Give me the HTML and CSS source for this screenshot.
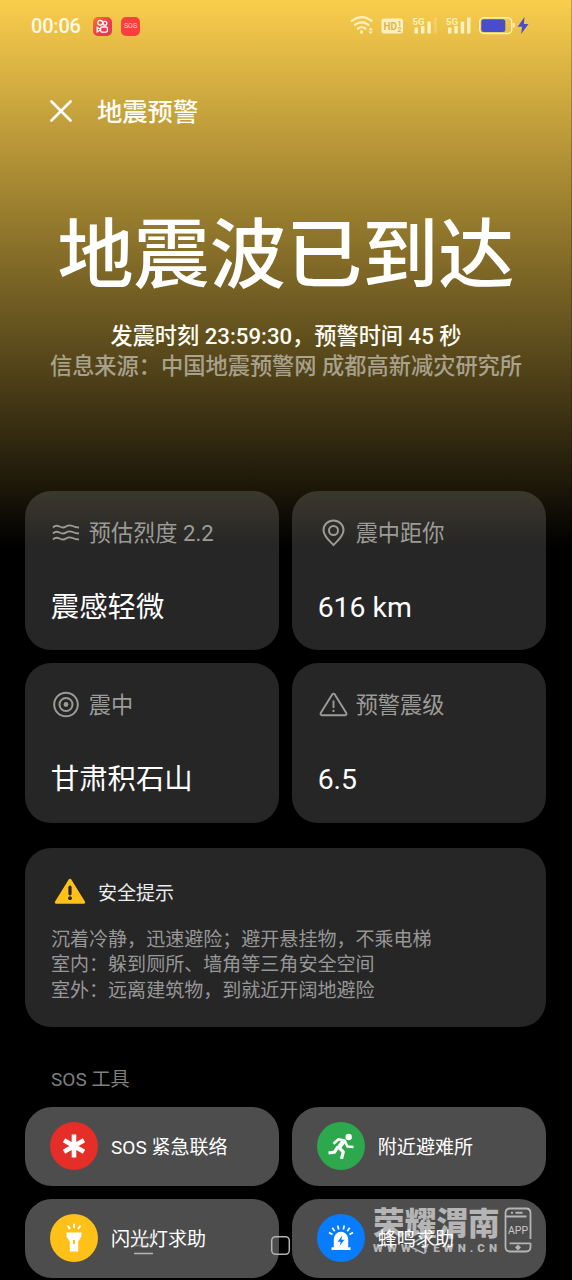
FILE: index.html
```html
<!DOCTYPE html>
<html lang="zh-CN">
<head>
<meta charset="utf-8">
<title>地震预警</title>
<link rel="stylesheet" href="styles.css">
</head>
<body>
<div class="screen">
  <div class="status">
    <span class="clock">00:06</span>
    <span class="app app-video">
      <svg width="19" height="19" viewBox="0 0 19 19" fill="none" stroke="#fff" stroke-width="1.3"><circle cx="7.2" cy="5.7" r="2.4"/><circle cx="12" cy="6.2" r="1.9"/><rect x="7.6" y="10" width="6.8" height="5.2" rx="1.4"/><path d="M7.4 12.3 4.2 10.4v4.4l3.2-1.8"/></svg>
    </span>
    <span class="app app-sos">SOS</span>
    <svg class="signals" width="182" height="24" viewBox="350 14 182 24">
      <g fill="none" stroke="#fff0c0" stroke-width="2.3" stroke-linecap="round">
        <path d="M352 20.700q9.700-7.200 19.400 0"/><path d="M355 24.800q6.700-5 13.400 0"/><path d="M358 28.500q3.700-2.600 7.400 0"/>
      </g>
      <circle cx="361.500" cy="32" r="1.700" fill="#fff0c0"/>
      <path d="M368.500 30.300l2.200-2.800 2.200 2.800zM368.500 31.500l2.200 2.600 2.200-2.600z" fill="#fff0c0"/>
      <rect x="381.500" y="18.500" width="21.500" height="15" rx="2.500" fill="#fff0c0"/>
      <text class="hd" x="383.500" y="30" textLength="13.500" lengthAdjust="spacingAndGlyphs">HD</text>
      <text class="hd-num" x="397.500" y="25.500">1</text><text class="hd-num" x="397.500" y="32.200">2</text>
      <text class="net" x="412.500" y="24.500">5G</text><text class="net" x="446" y="24.500">5G</text>
      <g fill="#fff0c0">
        <path d="M414.500 27.500h3.500v6h-3.500zM421 26h3.500v7.500h-3.500zM427.300 21.500h3.500v12h-3.500z"/>
        <path opacity=".25" d="M433.700 17.500h3.300v16h-3.300z"/>
        <path d="M448 27.500h3.500v6h-3.500zM454.300 26h3.500v7.500h-3.500zM460.700 21.500h3.500v12h-3.500zM467 17.500h3.500v16h-3.500z"/>
      </g>
      <rect x="479.700" y="17.700" width="32" height="15.800" rx="4" fill="none" stroke="#fff0c0" stroke-width="1.400"/>
      <rect x="481.300" y="19.300" width="24" height="12.600" rx="2.500" fill="#484dcb"/>
      <path d="M513.700 23v4.500" stroke="#fff0c0" stroke-width="1.800"/>
      <path d="M524.500 17l-6.800 9.800h4.400l-1 7.200 7.400-10h-4.600z" fill="#484dcb"/>
    </svg>
  </div>

  <header class="bar">
    <svg width="22" height="22" viewBox="0 0 22 22" fill="none" stroke="#fff" stroke-width="2.600" stroke-linecap="round"><path d="M1.500 1.500l19 19M20.500 1.500l-19 19"/></svg>
    <span class="bar-title">地震预警</span>
  </header>

  <section class="hero">
    <h1 class="headline">地震波已到达</h1>
    <p class="time">发震时刻 23:59:30，预警时间 45 秒</p>
    <p class="source">信息来源：中国地震预警网 成都高新减灾研究所</p>
  </section>

  <section class="grid">
    <article class="card">
      <div class="label">
        <svg width="30" height="30" viewBox="0 0 30 30" fill="none" stroke="currentColor" stroke-width="1.900"><path d="M2 9.500q3-3 6.500-1t6.500 0 6.500-.5 6.500 1.500"/><path d="M2 15.500q3-3 6.500-1t6.500 0 6.500-.5 6.500 1.500"/><path d="M2 21.500q3-3 6.500-1t6.500 0 6.500-.5 6.500 1.500"/></svg>
        <span>预估烈度 2.2</span>
      </div>
      <div class="value">震感轻微</div>
    </article>
    <article class="card">
      <div class="label">
        <svg width="30" height="30" viewBox="0 0 30 30" fill="none" stroke="currentColor" stroke-width="2"><path d="M15.500 27C12 23.500 5.500 18 5.500 12.200a10 9.700 0 0 1 20 0C25.500 18 19 23.500 15.500 27z"/><circle cx="15.500" cy="12.500" r="4.500"/></svg>
        <span>震中距你</span>
      </div>
      <div class="value">616 km</div>
    </article>
    <article class="card">
      <div class="label">
        <svg width="30" height="30" viewBox="0 0 30 30" fill="none" stroke="currentColor" stroke-width="2"><circle cx="15" cy="14.500" r="11.800"/><circle cx="15" cy="14.500" r="6.500"/><circle cx="15" cy="14.500" r="2.400" fill="currentColor" stroke="none"/></svg>
        <span>震中</span>
      </div>
      <div class="value">甘肃积石山</div>
    </article>
    <article class="card">
      <div class="label">
        <svg width="30" height="30" viewBox="0 0 30 30" fill="none" stroke="currentColor" stroke-width="1.900" stroke-linejoin="round"><path d="M14.200 4.400q1.300-1.600 2.600 0L28.300 23q.7 2-1.300 2.200H4Q2 25 2.700 23z"/><path d="M15.500 10.500v7.500M15.500 19.800v2.200"/></svg>
        <span>预警震级</span>
      </div>
      <div class="value">6.5</div>
    </article>
  </section>

  <section class="tips">
    <div class="tips-head">
      <svg width="32" height="27" viewBox="0 0 32 27"><path d="M14.700 1.500q1.300-1.600 2.600 0l13.600 22q.8 2-1.300 2.300H2.400Q.3 25.500 1.100 23.500z" fill="#ffc117"/><path d="M16 9.200v6.600" stroke="#262626" stroke-width="3.200" stroke-linecap="round"/><circle cx="16" cy="20.200" r="1.900" fill="#262626"/></svg>
      <span>安全提示</span>
    </div>
    <p>沉着冷静，迅速避险；避开悬挂物，不乘电梯</p>
    <p>室内：躲到厕所、墙角等三角安全空间</p>
    <p>室外：远离建筑物，到就近开阔地避险</p>
  </section>

  <h2 class="tools-title">SOS 工具</h2>
  <section class="tools">
    <div class="tool">
      <svg class="disc red" viewBox="0 0 48 48" stroke="#fff" stroke-width="4.600"><path d="M24 12.500v23M14 18.200l20 11.600M34 18.200L14 29.800"/></svg>
      <span>SOS 紧急联络</span>
    </div>
    <div class="tool">
      <svg class="disc green" viewBox="0 0 48 48" fill="none" stroke="#fff" stroke-linejoin="round"><circle cx="31.700" cy="15" r="3.200" fill="#fff" stroke="none"/><path d="M16.500 21.800l5-4.500 6 1.200 3 6 6 .5" stroke-width="2.700"/><path d="M26.200 19.500l-4.700 6.700" stroke-width="4.500"/><path d="M21 24.500l-3.500 5.700-6 .8M22.300 26l4 3.800-1.800 7" stroke-width="3.200"/></svg>
      <span>附近避难所</span>
    </div>
    <div class="tool">
      <svg class="disc yellow" viewBox="0 0 48 48"><path fill="#fff" d="M16.500 18.500h15v4l-3.300 5v10h-8.400v-10l-3.300-5z"/><path d="M24 26v4" stroke="#ffc117" stroke-width="2"/><path d="M17.500 11.500l2.400 3.500M24 9.800v4.200M30.500 11.500L28.100 15" stroke="#fff" stroke-width="1.900"/></svg>
      <span>闪光灯求助</span>
    </div>
    <div class="tool">
      <svg class="disc blue" viewBox="0 0 48 48"><path fill="#fff" d="M14.500 33.300h2.300V25a7.200 7.200 0 0 1 14.400 0v8.300h2.300V36h-19z"/><path fill="#087cff" d="M25.300 21.500l-4.700 6.300h3l-.8 4 4.600-6h-3z"/><path d="M12 18.500l3.500 2M15.300 13.800l2.400 3.500M20.700 11.500l1 4M27.300 11.500l-1 4M32.700 13.800l-2.400 3.500M36 18.500l-3.500 2" stroke="#fff" stroke-width="1.700"/></svg>
      <span class="over">蜂鸣求助</span>
    </div>
  </section>

  <svg class="nav" width="572" height="30" viewBox="0 1230 572 30" fill="none" stroke="#b4b4b4" stroke-width="1.500">
    <path d="M134 1237.500h19M134 1245.500h19" opacity=".55"/><path d="M134 1253.500h19"/>
    <rect x="271.700" y="1236.700" width="17.600" height="17.600" rx="4"/>
    <path d="M425.500 1236.500v15.500q-.6 1.800-2.500 1l-12-6q-1.800-1.500 0-3l12.500-7.200z"/>
  </svg>
  <div class="mark">
    <div class="mark-words"><div class="mark-name">荣耀渭南</div><div class="mark-url">WWW.YEWN.CN</div></div>
    <svg width="28" height="46" viewBox="0 0 28 46" fill="none" stroke="#b5b5b5" stroke-width="1.800">
      <path d="M1.500 31V6q0-4.500 4.500-4.500h16q4.500 0 4.500 4.500v26M1.500 31v9q0 4.500 4.500 4.500h16q4.500 0 4.500-4.500v-4"/><path d="M1.500 9.500h21M5.500 36.300h21"/><path d="M7 5.700h2M11.500 5.700h7" stroke-width="2"/><path d="M14 37.500l3 3-3 3-3-3z" fill="#b5b5b5" stroke="none"/>
      <text class="mark-app" x="14" y="26.500">APP</text>
    </svg>
  </div>
</div>
</body>
</html>
```

FILE: styles.css
```css
* { box-sizing: border-box; }
body { margin: 0; background: #000; }
.screen {
  position: relative;
  width: 572px;
  height: 1280px;
  overflow: hidden;
  color: #fff;
  background: linear-gradient(#facd4c 0, #000 548px) #000;
  box-shadow: inset -1px 0 rgba(0, 0, 0, .22);
  font-family: Roboto, "Noto Sans CJK SC", sans-serif;
}
p, h1, h2 { margin: 0; font-weight: 400; }
svg { flex: none; }
.status { display: flex; align-items: center; height: 52px; padding-left: 31px; }
.clock { width: 62px; font-size: 20px; line-height: 24px; font-weight: 500; letter-spacing: -.2px; color: #fff9e4; }
.app { display: flex; align-items: center; justify-content: center; width: 19px; height: 19px; border-radius: 5px; }
.app-video { background: linear-gradient(135deg, #f57d25, #ee3d4b 50%, #e73656); }
.app-sos { margin-left: 9px; background: #fa403e; font-size: 7px; color: #ffd6cc; }
.signals { margin-left: 210px; }
.hd { font: 700 10px Roboto, sans-serif; fill: #dfb64a; }
.hd-num { font: 700 7px Roboto, sans-serif; fill: #dfb64a; }
.net { font: 700 9.500px Roboto, sans-serif; fill: #fff0c0; }
.bar { display: flex; align-items: center; gap: 25px; height: 60px; margin-top: 29px; padding-left: 50px; }
.bar svg { margin-top: -1px; }
.bar-title { padding-top: 4px; font-size: 25.300px; line-height: 36px; font-weight: 500; color: #fffdf4; }
.hero { height: 350px; padding-top: 69px; text-align: center; white-space: nowrap; }
.headline { font-size: 76.200px; line-height: 92px; font-weight: 500; }
.time { margin-top: 19px; font-size: 22.200px; line-height: 31px; font-weight: 500; color: #fffdf4; }
.source { margin-top: -1px; font-size: 22.230px; line-height: 31px; color: rgba(255, 255, 255, .5); font-weight: 500; }
.grid { display: grid; grid-template-columns: repeat(2, 1fr); gap: 13px; padding: 0 26px 0 25.300px; }
.card { height: 159.300px; padding: 26px 26px 0 25.500px; border-radius: 26px; background: rgba(255, 255, 255, .15); }
.label { display: flex; align-items: center; gap: 8px; height: 31px; color: #9c9b98; font-size: 22.200px; line-height: 31px; }
.label span { padding-top: 1px; }
.value { margin-top: 39px; font-size: 28.400px; line-height: 42px; }
.tips { height: 179px; margin: 25.400px 26px 0 25.300px; padding: 29px 25px 0 25.700px; border-radius: 26px; background: #262626; font-size: 19.050px; line-height: 25.400px; color: #979797; }
.tips-head { display: flex; align-items: center; gap: 12px; height: 30px; margin: 0 0 20px 3px; color: #ececec; }
.tips-head span { padding-top: 4px; }
.tools-title { margin: 40px 0 14px 51px; font-size: 19.050px; line-height: 26px; color: #7f7f7f; }
.tools { display: grid; grid-template-columns: repeat(2, 1fr); gap: 13px; padding: 0 26px 0 25.300px; }
.tool { display: flex; align-items: center; gap: 12.500px; height: 79px; padding-left: 25.200px; border-radius: 27px; background: #4d4d4d; font-size: 19.050px; line-height: 28px; }
.tool span { padding-top: 3px; }
.disc { width: 48px; height: 48px; border-radius: 50%; }
.red { background: #e52e28; }
.green { background: #2ea84d; }
.yellow { background: #ffc117; }
.blue { background: #087cff; }
.over { position: relative; z-index: 2; }
.nav { position: absolute; left: 0; top: 1230px; }
.mark { position: absolute; left: 373px; top: 1207px; display: flex; gap: 4px; color: #b5b5b5; }
.mark-words { width: 127px; white-space: nowrap; }
.mark-name { margin-top: -2px; font: 900 31.700px/32px "Noto Sans CJK SC", sans-serif; }
.mark-url { margin-top: 5px; font: 900 11.500px/13px Roboto, sans-serif; letter-spacing: 4.050px; }
.mark-app { font: 10.500px Roboto, sans-serif; text-anchor: middle; fill: #c8c8c8; stroke: none; }
```
